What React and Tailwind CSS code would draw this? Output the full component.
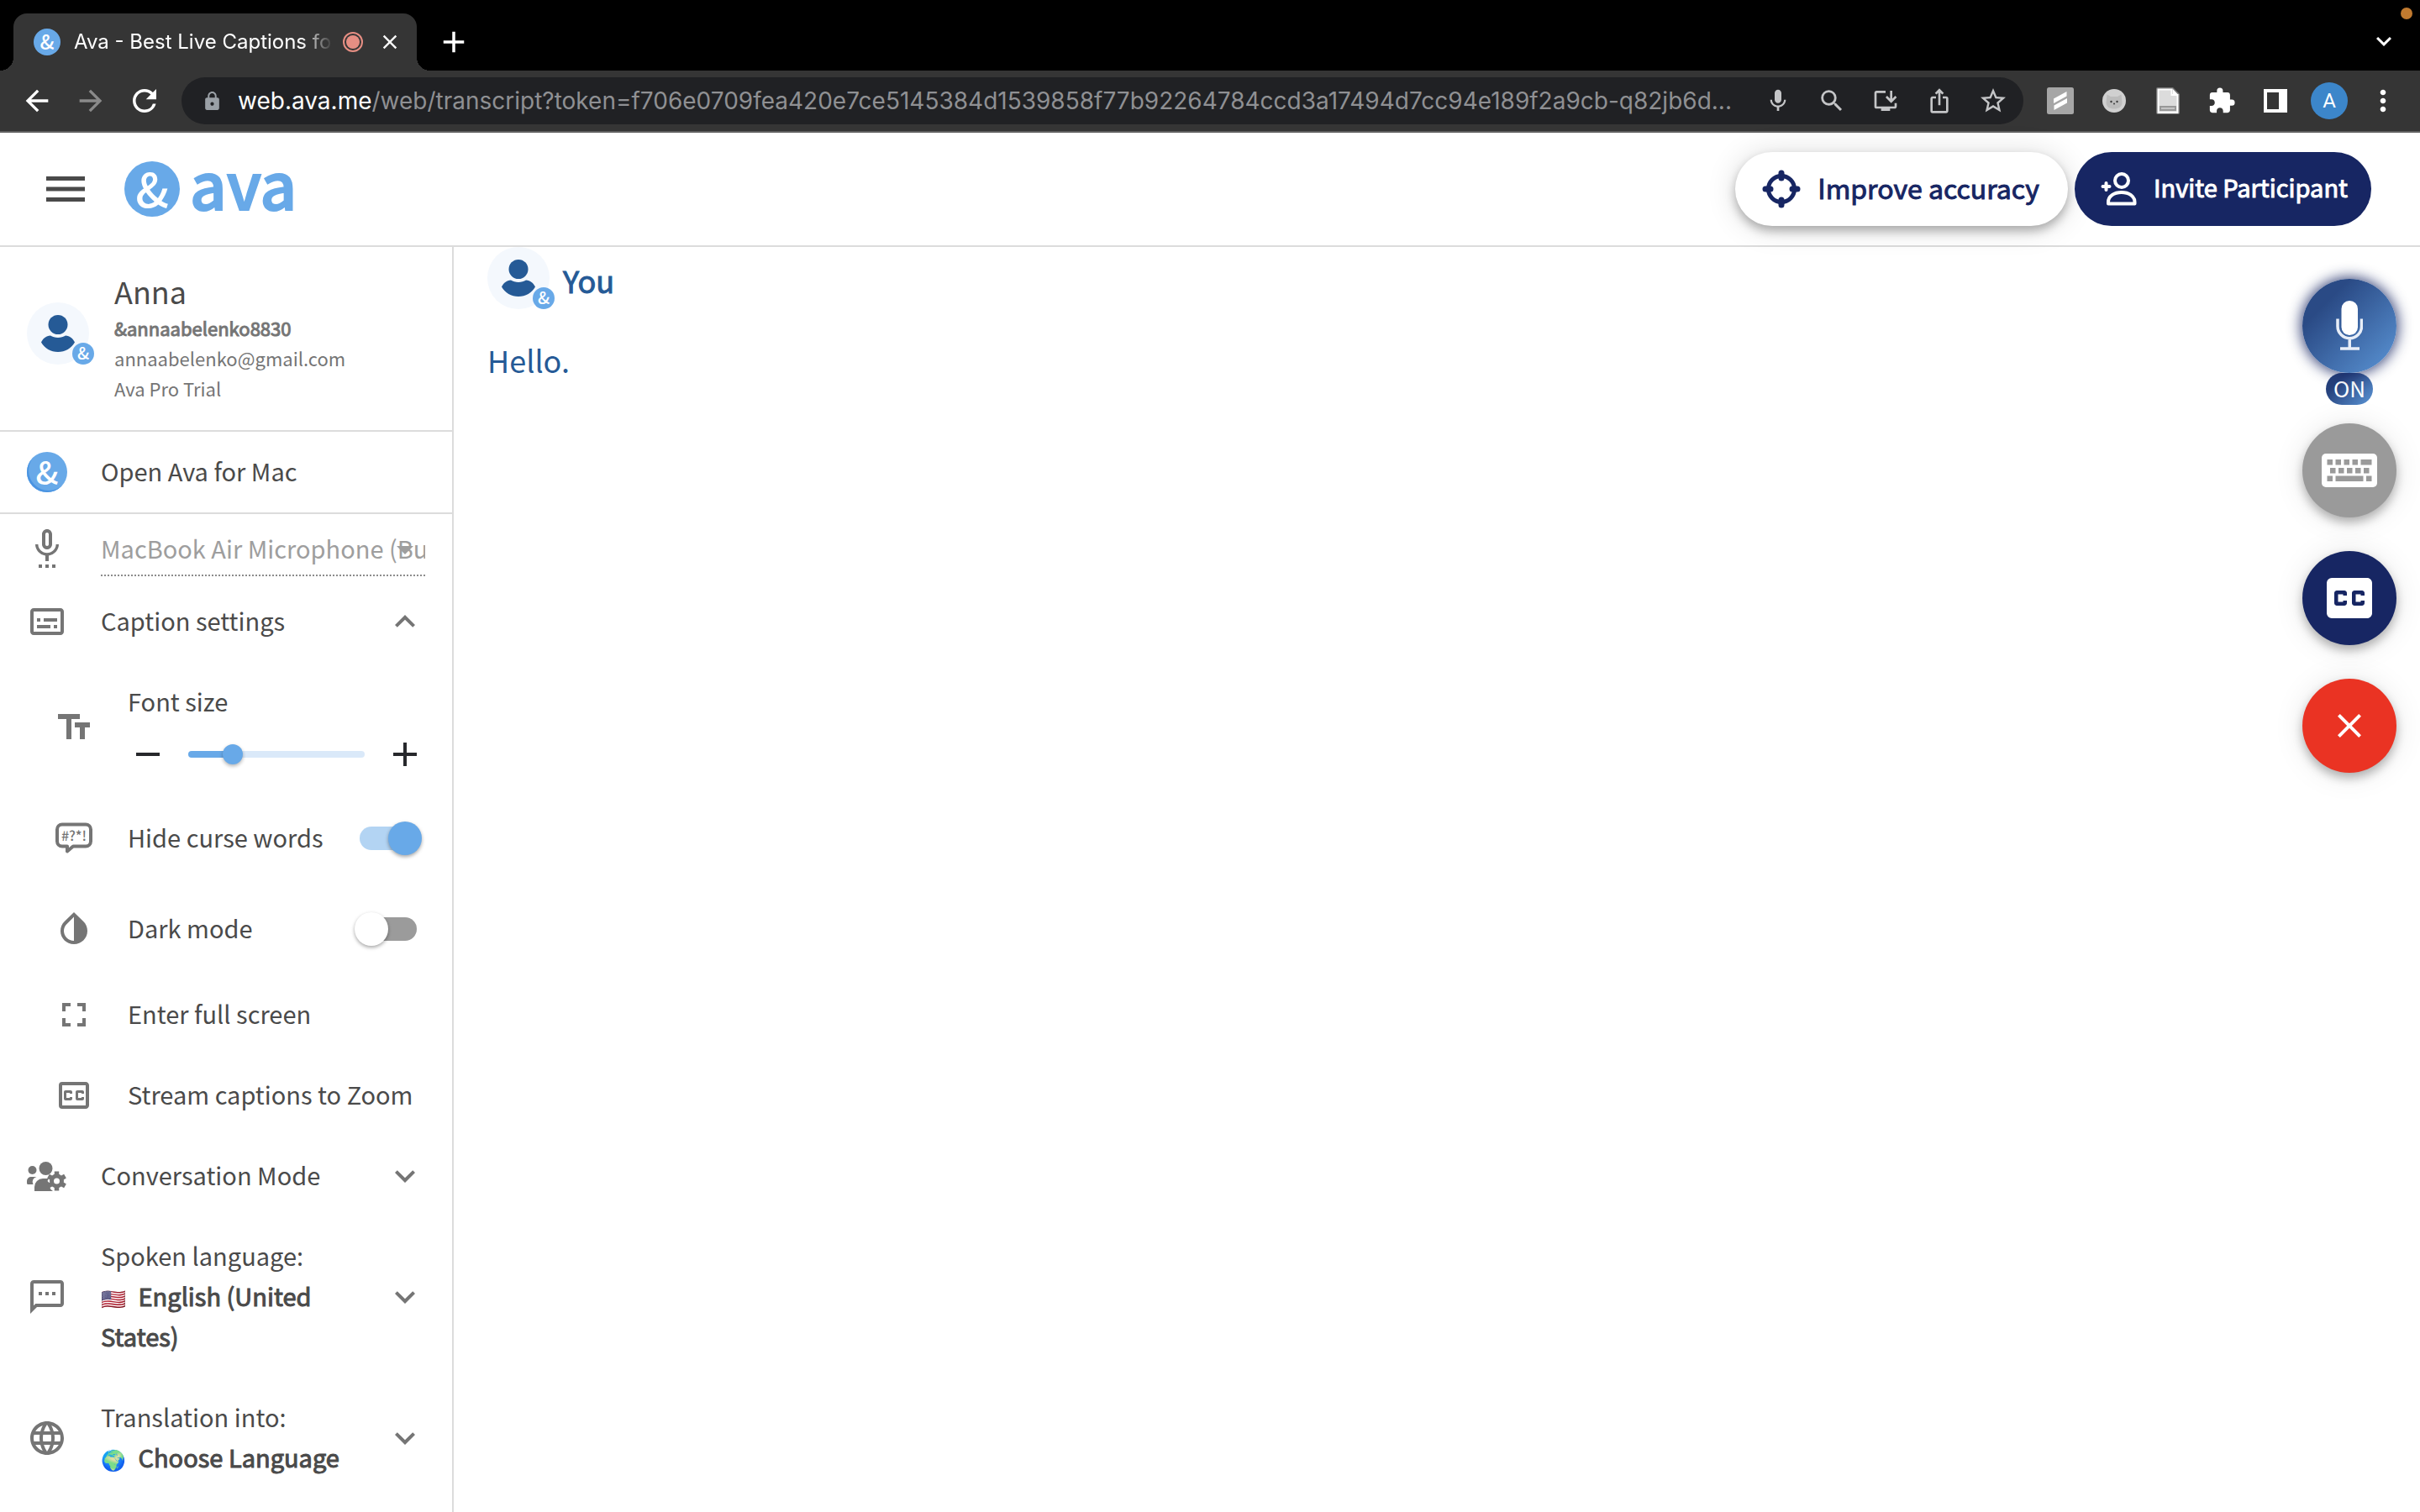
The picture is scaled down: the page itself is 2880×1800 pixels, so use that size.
import { useState } from "react";
import {
  MdAdd,
  MdArrowBack,
  MdArrowDropDown,
  MdArrowForward,
  MdClose,
  MdClosedCaption,
  MdExpandLess,
  MdExpandMore,
  MdExtension,
  MdFullscreen,
  MdInstallDesktop,
  MdInvertColors,
  MdIosShare,
  MdLanguage,
  MdLock,
  MdMic,
  MdMoreVert,
  MdOutlineClosedCaption,
  MdOutlineSettingsVoice,
  MdOutlineSms,
  MdOutlineSubtitles,
  MdRefresh,
  MdRemove,
  MdSearch,
  MdStarOutline,
  MdTextFields,
} from "react-icons/md";

const iconButton = "flex h-12 w-12 shrink-0 items-center justify-center";

/* ---------- brand pieces ---------- */

function AmpBadge({ className }) {
  return (
    <span
      aria-hidden="true"
      className={`flex shrink-0 items-center justify-center rounded-full bg-[#68a9e8] font-medium leading-none text-white ${className}`}
    >
      &amp;
    </span>
  );
}

function Avatar() {
  return (
    <div className="relative h-[74px] w-[74px] shrink-0 rounded-full bg-[#f4f8fd]">
      <svg viewBox="0 0 74 74" className="h-full w-full" fill="#255a96" aria-hidden="true">
        <circle cx="37" cy="26.500" r="11.500" />
        <path d="M28 39.500c2.500 1.600 5.600 2.500 9 2.500s6.500-.9 9-2.500c5 .5 9 3.500 11 8-4 7-11.500 11.500-20 11.500S21 54.500 17 47.500c2-4.500 6-7.500 11-8z" />
      </svg>
      <AmpBadge className="absolute bottom-0 -right-1.5 h-[26px] w-[26px] pb-0.5 text-[20px]" />
    </div>
  );
}

/* ---------- custom icons ---------- */

function CrosshairIcon() {
  return (
    <svg viewBox="0 0 46 46" className="h-[46px] w-[46px]" fill="none" stroke="#172663" aria-hidden="true">
      <circle cx="23" cy="23" r="15.500" strokeWidth="5" />
      <g strokeWidth="7" strokeLinecap="round">
        <path d="M23 4v6M23 36v6M4 23h6M36 23h6" />
      </g>
    </svg>
  );
}

function InviteIcon() {
  return (
    <svg viewBox="0 0 44 44" className="h-11 w-11" fill="none" stroke="#fff" strokeWidth="4" aria-hidden="true">
      <circle cx="26" cy="12" r="8" />
      <path d="M10 37.500v2h31.500v-2c0-7-7-11.500-15.750-11.500S10 30.500 10 37.500z" strokeLinejoin="round" />
      <path d="M7.500 15v8M3.500 19h8" strokeLinecap="round" />
    </svg>
  );
}

function CurseIcon() {
  return (
    <svg viewBox="0 0 44 38" className="h-[38px] w-11" aria-hidden="true">
      <path
        d="M8 2.500h28a6 6 0 0 1 6 6v14a6 6 0 0 1-6 6H21l-7 6v-6H8a6 6 0 0 1-6-6v-14a6 6 0 0 1 6-6z"
        fill="none"
        stroke="#757575"
        strokeWidth="4"
        strokeLinejoin="round"
      />
      <text x="22" y="21.500" textAnchor="middle" fontSize="16" fontWeight="500" fill="#757575">
        #?*!
      </text>
    </svg>
  );
}

function PeopleCogIcon() {
  return (
    <svg viewBox="0 0 48 40" className="h-10 w-12" fill="#757575" aria-hidden="true">
      <circle cx="6.500" cy="13" r="5" />
      <path d="M5 21h6.500a6 6 0 0 0-4 9H1.500a1.500 1.500 0 0 1-1.500-1.500V26a5 5 0 0 1 5-5z" />
      <circle cx="22.500" cy="11" r="8" />
      <path d="M9 38v-5a10 10 0 0 1 10-10h7l-1.500 3 3 3-.5 4 1.500 3 2.500 2z" />
      <g transform="translate(35.500 26)">
        <circle r="6" fill="none" stroke="#757575" strokeWidth="5" />
        <g stroke="#757575" strokeWidth="5.500">
          <path d="M0-7v-4.500M0 7v4.500M6-3.500l4-2.300M-6 3.500l-4 2.300M6 3.500l4 2.300M-6-3.500l-4-2.300" />
        </g>
      </g>
    </svg>
  );
}

function StudioMicIcon() {
  return (
    <svg viewBox="0 0 32 60" className="h-[60px] w-8" fill="none" stroke="#e8eef8" strokeWidth="3.500" aria-hidden="true">
      <rect x="6.500" y="0" width="19.500" height="41" rx="9.750" fill="#fff" stroke="none" />
      <path d="M2 21.500v9a14.250 14.250 0 0 0 28.500 0v-9M16.250 45v12M5 57h23" />
    </svg>
  );
}

function KeyboardIcon() {
  const keys = [
    [6.500, 7, 6.500], [16.500, 7, 6.500], [26.500, 7, 6.500], [36.500, 7, 6.500], [46.500, 7, 13],
    [10, 17, 6.500], [20, 17, 6.500], [30, 17, 6.500], [40, 17, 6.500], [50, 17, 6.500],
    [6.500, 26.500, 6.500], [16.500, 26.500, 33], [53, 26.500, 6.500],
  ];
  return (
    <svg viewBox="0 0 66 40" className="h-10 w-[66px]" aria-hidden="true">
      <rect width="66" height="40" rx="5" fill="#fff" />
      {keys.map(([x, y, w]) => (
        <rect key={`${x}-${y}`} x={x} y={y} width={w} height="6.500" fill="#9a9a9a" />
      ))}
    </svg>
  );
}

/* ---------- browser chrome ---------- */

function TabStrip() {
  return (
    <div className="flex h-[84px] items-end bg-black text-white">
      <span className="h-4 w-4 bg-[radial-gradient(circle_at_0_0,transparent_16px,#353535_16px)]" />
      <div className="flex h-[68px] w-[480px] items-center rounded-t-2xl bg-[#353535] pl-6 pr-4">
        <AmpBadge className="h-8 w-8 pb-0.5 text-[24px]" />
        <span className="ml-4 flex-1 overflow-hidden whitespace-nowrap font-[Inter,sans-serif] text-[24px] [mask-image:linear-gradient(to_right,black_88%,transparent)]">
          Ava - Best Live Captions fo
        </span>
        <svg viewBox="0 0 24 24" className="ml-3 h-6 w-6" aria-label="Recording">
          <circle cx="12" cy="12" r="11" fill="none" stroke="#e68e83" strokeWidth="2" />
          <circle cx="12" cy="12" r="8" fill="#e68e83" />
        </svg>
        <button aria-label="Close tab" className="ml-4 flex h-8 w-8 items-center justify-center">
          <MdClose size={28} />
        </button>
      </div>
      <span className="h-4 w-4 bg-[radial-gradient(circle_at_100%_0,transparent_16px,#353535_16px)]" />
      <button aria-label="New tab" className="flex h-[68px] w-14 items-center justify-center">
        <MdAdd size={42} />
      </button>
      <div className="ml-auto flex h-full flex-col items-end pr-[9px] pt-[9px]">
        <span className="h-3.5 w-3.5 rounded-full bg-[#c17a2f]" />
        <button aria-label="Search tabs" className="mr-4 mt-2 flex h-9 w-9 items-center justify-center">
          <MdExpandMore size={36} />
        </button>
      </div>
    </div>
  );
}

function ToolButton({ label, className = "", children }) {
  return (
    <button aria-label={label} className={`flex h-14 w-16 shrink-0 items-center justify-center ${className}`}>
      {children}
    </button>
  );
}

function Toolbar() {
  return (
    <div className="flex h-[74px] items-center border-b-2 border-[#606060] bg-[#353535] pl-3 pr-3 text-white">
      <ToolButton label="Back"><MdArrowBack size={40} /></ToolButton>
      <ToolButton label="Forward" className="text-[#8a8a8a]"><MdArrowForward size={40} /></ToolButton>
      <ToolButton label="Reload"><MdRefresh size={42} /></ToolButton>
      <div className="ml-3 flex h-14 min-w-0 flex-1 items-center rounded-full bg-[#202124] pl-6 pr-1 text-[#c4c5c7]">
        <MdLock size={25} className="shrink-0 text-[#9aa0a6]" />
        <p className="ml-[18px] min-w-0 flex-1 overflow-hidden whitespace-nowrap font-[Inter,sans-serif] text-[28px] leading-10 text-[#8f9093]">
          <span className="text-white">web.ava.me</span>
          /web/transcript?token=f706e0709fea420e7ce5145384d1539858f77b92264784ccd3a17494d7cc94e189f2a9cb-q82jb6d...
        </p>
        <ToolButton label="Voice search"><MdMic size={32} /></ToolButton>
        <ToolButton label="Zoom"><MdSearch size={34} /></ToolButton>
        <ToolButton label="Install app"><MdInstallDesktop size={32} /></ToolButton>
        <ToolButton label="Share"><MdIosShare size={32} /></ToolButton>
        <ToolButton label="Bookmark"><MdStarOutline size={36} /></ToolButton>
      </div>
      <ToolButton label="Scribe" className="ml-3">
        <svg viewBox="0 0 32 32" className="h-8 w-8">
          <rect width="32" height="32" rx="2.500" fill="#a6a6a6" />
          <path d="M8 13.500 23.500 5v5.500L8 19zM8.500 21.500 24 13v5.500L8.500 27z" fill="#fff" />
        </svg>
      </ToolButton>
      <ToolButton label="Cat extension">
        <svg viewBox="0 0 28 28" className="h-7 w-7">
          <circle cx="14" cy="14" r="14" fill="#d0d0d0" />
          <path d="M5.500 6.500 10 9h8l4.500-2.500L23.500 16c0 5-4 7.500-9.500 7.500S4.500 21 4.500 16z" fill="#bcbcbc" />
          <circle cx="10.500" cy="15" r="1.200" fill="#3c3c3c" />
          <circle cx="17.500" cy="15" r="1.200" fill="#3c3c3c" />
          <circle cx="14" cy="17.500" r="1" fill="#3c3c3c" />
        </svg>
      </ToolButton>
      <ToolButton label="Document extension">
        <svg viewBox="0 0 28 32" className="h-8 w-7">
          <path d="M2 0h18l8 8v22a2 2 0 0 1-2 2H2a2 2 0 0 1-2-2V2a2 2 0 0 1 2-2z" fill="#757575" />
          <path d="M2.500 2.500h16v6.500h7v21h-23z" fill="#dcdcdc" stroke="#fff" strokeWidth="2" />
          <path d="M19.500 1.500 26 8.500h-6.500z" fill="#fff" />
          <rect x="5" y="23" width="18" height="4" fill="#c4c4c4" stroke="#999" strokeWidth="2" />
        </svg>
      </ToolButton>
      <ToolButton label="Extensions"><MdExtension size={34} /></ToolButton>
      <ToolButton label="Side panel">
        <svg viewBox="0 0 28 28" className="h-7 w-7">
          <path fillRule="evenodd" d="M0 0h28v28H0zM4 4v20h14V4z" fill="#fff" />
        </svg>
      </ToolButton>
      <ToolButton label="Profile">
        <span className="flex h-11 w-11 items-center justify-center rounded-full bg-[#3c86ca] font-[Roboto,sans-serif] text-[24px]">
          A
        </span>
      </ToolButton>
      <ToolButton label="Menu"><MdMoreVert size={40} /></ToolButton>
    </div>
  );
}

/* ---------- app ---------- */

function Header() {
  return (
    <header className="flex h-[136px] items-center border-b-2 border-[#dcdcdc] pl-12 pr-[58px]">
      <button aria-label="Menu" className="flex h-15 w-15 items-center justify-center">
        <svg viewBox="0 0 46 30" className="h-[30px] w-[46px]" fill="#4a4a4a">
          <path d="M0 0h46v5H0zM0 12.500h46v5H0zM0 25h46v5H0z" />
        </svg>
      </button>
      <a href="#home" className="ml-10 flex items-center text-[#68a9e8]">
        <AmpBadge className="h-[66px] w-[66px] pb-1 text-[56px]" />
        <span className="ml-3 pb-4 text-[76px] font-medium leading-[80px] [-webkit-text-stroke:2px]">ava</span>
      </a>
      <div className="ml-auto flex gap-2 whitespace-nowrap">
        <button className="flex h-22 items-center rounded-full bg-white pl-8 pr-[34px] text-[32px] text-[#172663] shadow-[0_6px_12px_rgba(0,0,0,0.28),0_2px_36px_rgba(0,0,0,0.14)]">
          <CrosshairIcon />
          <span className="ml-5 pb-1 [-webkit-text-stroke:1px]">Improve accuracy</span>
        </button>
        <button className="flex h-22 items-center rounded-full bg-[#172663] pl-[30px] pr-7 text-[29px] text-white">
          <InviteIcon />
          <span className="ml-5 pb-1 [-webkit-text-stroke:1px]">Invite Participant</span>
        </button>
      </div>
    </header>
  );
}

function Row({ icon, label, sub = false, chevron, href = "#", tall = false }) {
  const Chevron = chevron === "up" ? MdExpandLess : MdExpandMore;
  const inset = sub ? "pl-16" : "pl-8";
  const pad = tall ? "py-[22px]" : "";
  const body = (
    <>
      <span className={`${iconButton} text-[#757575]`}>{icon}</span>
      <span className={`ml-10 flex-1 pb-1 text-left leading-[48px] ${tall ? "" : "whitespace-nowrap"}`}>{label}</span>
      {chevron && (
        <span className={`${iconButton} text-[#757575]`}>
          <Chevron size={48} />
        </span>
      )}
    </>
  );
  const cls = `flex min-h-24 w-full items-center pr-8 ${inset} ${pad}`;
  return chevron ? (
    <button className={cls} aria-expanded={chevron === "up"}>{body}</button>
  ) : (
    <a className={cls} href={href}>{body}</a>
  );
}

function LanguageLabel({ title, emoji, value }) {
  return (
    <>
      <span className="block">{title}</span>
      <span className="block">
        <span className="mr-2 text-[24px] leading-none">{emoji}</span>{" "}
        <span className="[-webkit-text-stroke:1px]">{value}</span>
      </span>
    </>
  );
}

function ToggleRow({ id, icon, label, on }) {
  const [checked, setChecked] = useState(on);
  return (
    <div className="flex h-[108px] items-center pl-16 pr-[42px]">
      <span className={`${iconButton} text-[#757575]`}>{icon}</span>
      <label htmlFor={id} className="ml-10 flex-1 whitespace-nowrap pb-1 leading-[48px]">{label}</label>
      <input
        id={id}
        type="checkbox"
        role="switch"
        checked={checked}
        onChange={(e) => setChecked(e.target.checked)}
        className="relative h-7 w-[68px] appearance-none rounded-full bg-[#9b9b9b] before:absolute before:-left-1.5 before:-top-1.5 before:h-10 before:w-10 before:rounded-full before:bg-white before:shadow-[0_2px_4px_rgba(0,0,0,0.35)] before:content-[''] checked:bg-[#b3d4f3] checked:before:left-[34px] checked:before:bg-[#68a9e8]"
      />
    </div>
  );
}

function Sidebar() {
  const [size, setSize] = useState(22);
  return (
    <aside className="w-[540px] shrink-0 border-r-2 border-[#dcdcdc] text-[29px] text-[#4a4a4a]">
      <section className="flex items-start border-b-2 border-[#dcdcdc] pb-8 pl-8 pr-8 pt-7">
        <div className="pt-[38px]"><Avatar /></div>
        <div className="ml-[30px] text-[22px] leading-9 text-[#757575]">
          <h2 className="pb-0.5 text-[36px] leading-[48px] text-[#4a4a4a]">Anna</h2>
          <p className="[-webkit-text-stroke:1px]">&amp;annaabelenko8830</p>
          <p>annaabelenko@gmail.com</p>
          <p>Ava Pro Trial</p>
        </div>
      </section>
      <div className="border-b-2 border-[#dcdcdc]">
        <Row
          href="#mac"
          label="Open Ava for Mac"
          icon={<AmpBadge className="h-12 w-12 pb-0.5 text-[38px] shadow-[inset_2px_-2px_0_#4a94e2]" />}
        />
      </div>

      <div className="flex h-20 items-center pl-8 pr-8">
        <span className={`${iconButton} text-[#757575]`}><MdOutlineSettingsVoice size={48} /></span>
        <div className="relative ml-10 mt-2 flex-1 border-b-2 border-dotted border-[#8c8c8c] pb-1">
          <MdArrowDropDown size={48} className="absolute right-0 top-1 text-[#9e9e9e]" />
          <select
            aria-label="Microphone"
            disabled
            className="relative block h-[54px] w-full appearance-none whitespace-nowrap bg-transparent text-[#9e9e9e] opacity-100"
          >
            <option>MacBook Air Microphone (Bu</option>
          </select>
        </div>
      </div>

      <Row label="Caption settings" chevron="up" icon={<MdOutlineSubtitles size={48} />} />

      <div className="flex items-center pb-[22px] pl-16 pr-8 pt-[22px]">
        <span className={`${iconButton} text-[#757575]`}><MdTextFields size={48} /></span>
        <div className="ml-10 flex-1">
          <label htmlFor="font-size" className="block leading-[48px]">Font size</label>
          <div className="mt-4 flex items-center text-[#27282c]">
            <button aria-label="Smaller text" className={iconButton} onClick={() => setSize(size - 5)}>
              <MdRemove size={48} />
            </button>
            <div className="flex min-w-0 flex-1 px-6">
              <input
                id="font-size"
                type="range"
                value={size}
                onChange={(e) => setSize(Number(e.target.value))}
                style={{ "--fill": `${size}%` }}
                className="h-2 w-full min-w-0 appearance-none rounded-full bg-[linear-gradient(to_right,#68a9e8_var(--fill),#dae9f9_var(--fill))] [&::-webkit-slider-thumb]:h-6 [&::-webkit-slider-thumb]:w-6 [&::-webkit-slider-thumb]:appearance-none [&::-webkit-slider-thumb]:rounded-full [&::-webkit-slider-thumb]:bg-[#68a9e8] [&::-webkit-slider-thumb]:shadow-[0_2px_4px_rgba(0,0,0,0.3)]"
              />
            </div>
            <button aria-label="Larger text" className={iconButton} onClick={() => setSize(size + 5)}>
              <MdAdd size={48} />
            </button>
          </div>
        </div>
      </div>

      <ToggleRow id="curse" label="Hide curse words" on icon={<CurseIcon />} />
      <ToggleRow id="dark" label="Dark mode" on={false} icon={<MdInvertColors size={48} />} />
      <Row sub href="#fullscreen" label="Enter full screen" icon={<MdFullscreen size={48} />} />
      <Row sub href="#zoom" label="Stream captions to Zoom" icon={<MdOutlineClosedCaption size={48} />} />
      <Row label="Conversation Mode" chevron="down" icon={<PeopleCogIcon />} />
      <Row
        tall
        chevron="down"
        icon={<MdOutlineSms size={48} />}
        label={<LanguageLabel title="Spoken language:" emoji="🇺🇸" value="English (United States)" />}
      />
      <Row
        tall
        chevron="down"
        icon={<MdLanguage size={48} />}
        label={<LanguageLabel title="Translation into:" emoji="🌍" value="Choose Language" />}
      />
    </aside>
  );
}

function Fab({ label, className, children }) {
  return (
    <button aria-label={label} className={`flex h-28 w-28 shrink-0 items-center justify-center rounded-full ${className}`}>
      {children}
    </button>
  );
}

const fabShadow = "shadow-[0_6px_12px_rgba(0,0,0,0.28),0_2px_36px_rgba(0,0,0,0.10)]";

export default function App() {
  return (
    <div className="flex min-h-screen flex-col bg-white font-['Noto_Sans_CJK_SC','Noto_Sans',sans-serif]">
      <TabStrip />
      <Toolbar />
      <Header />
      <div className="flex flex-1">
        <Sidebar />
        <main className="flex flex-1 items-start justify-between pl-10 pr-7 text-[36px] text-[#255a96]">
          <article>
            <div className="flex items-center">
              <Avatar />
              <h1 className="ml-4 pt-1 leading-[56px] [-webkit-text-stroke:1px]">You</h1>
            </div>
            <p className="mt-8 leading-[56px]">Hello.</p>
          </article>
          <div className="flex flex-col items-center pt-[38px]">
            <Fab
              label="Microphone on"
              className="relative bg-[linear-gradient(135deg,#2a4a85_25%,#5b95d6)] shadow-[0_0_16px_2px_rgba(23,38,99,0.85)]"
            >
              <StudioMicIcon />
            </Fab>
            <span className="flex h-[38px] w-14 items-center justify-center rounded-full bg-[linear-gradient(135deg,#25407b_25%,#5b95d6)] pb-1 text-[26px] text-white">
              ON
            </span>
            <Fab label="Keyboard" className={`mt-[22px] bg-[#9a9a9a] ${fabShadow}`}><KeyboardIcon /></Fab>
            <Fab label="Captions" className={`mt-10 bg-[#172663] text-white ${fabShadow}`}><MdClosedCaption size={72} /></Fab>
            <Fab label="End conversation" className={`mt-10 bg-[#ea3323] text-white ${fabShadow}`}><MdClose size={48} /></Fab>
          </div>
        </main>
      </div>
    </div>
  );
}
